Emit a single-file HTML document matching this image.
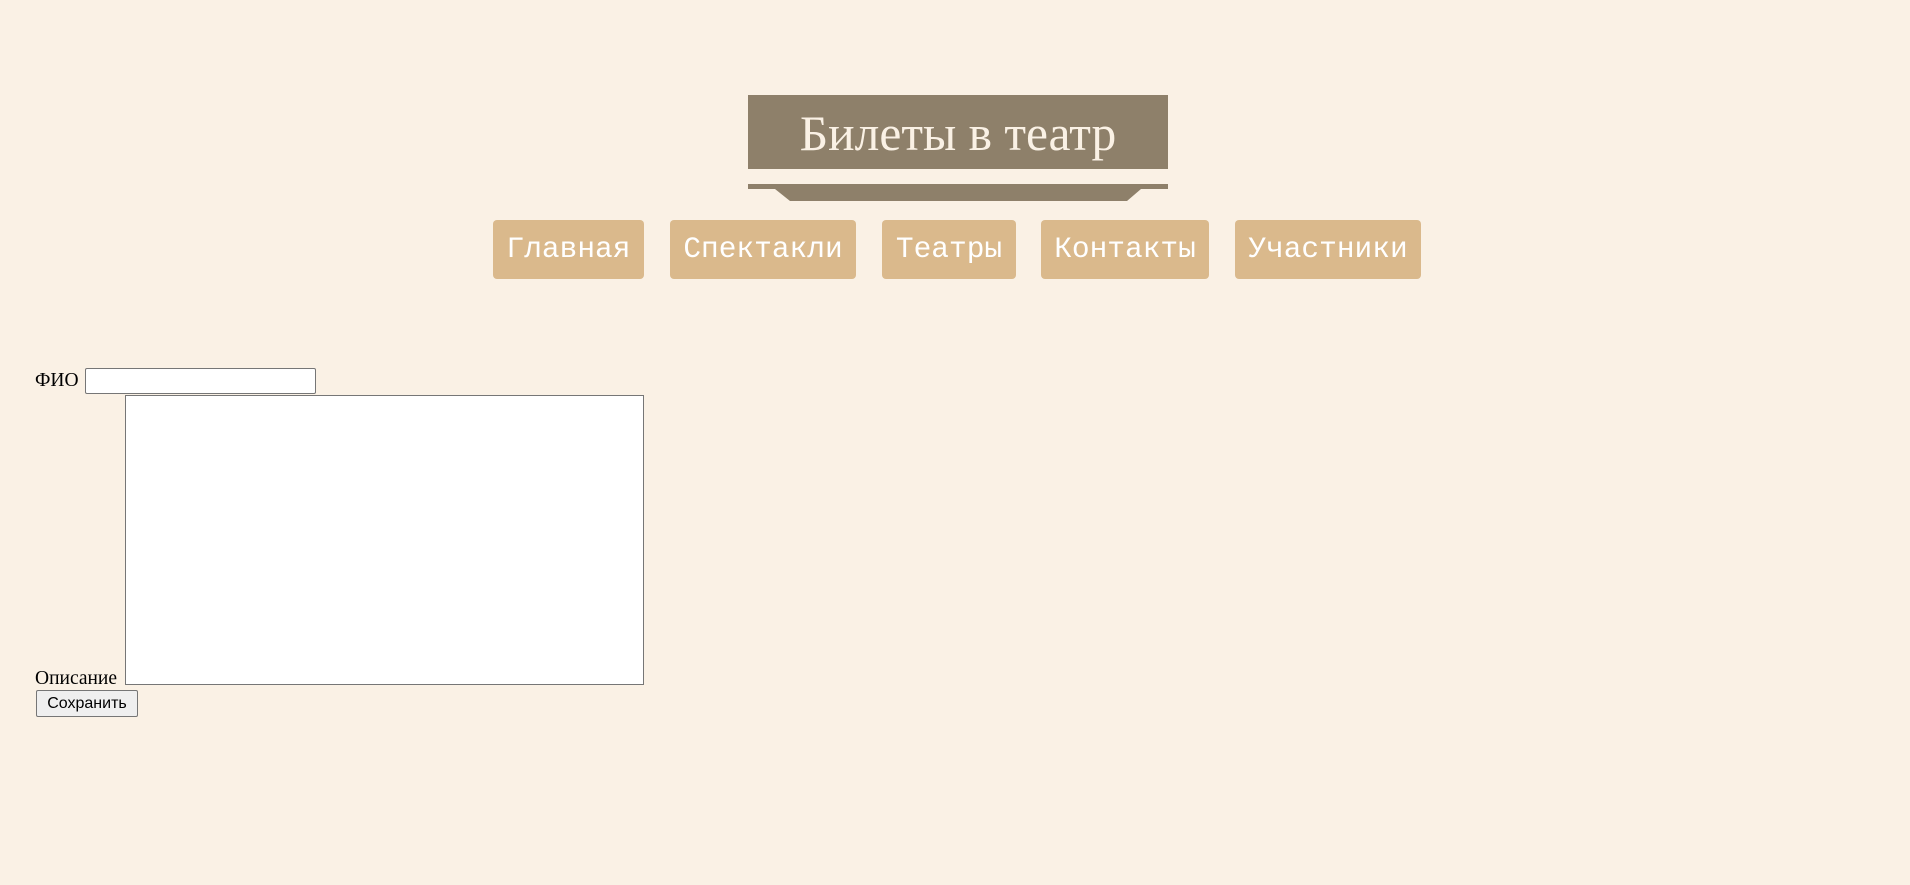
<!DOCTYPE html>
<html><head><meta charset="utf-8"><style>
html,body{margin:0;padding:0;background:#FAF1E5;width:1910px;height:885px;overflow:hidden;position:relative}
.t{position:absolute;left:748px;top:95px;width:420px;height:74px;background:#8E806A;color:#FAF1E5;font-family:"Liberation Serif",serif;font-size:49.5px;text-align:center;line-height:78px}
.n{position:absolute;top:220px;height:59px;background:#DAB98C;border-radius:4px;color:#fff;font-family:"Liberation Mono",monospace;font-size:29.5px;line-height:59px;text-align:center}
.l{position:absolute;font-family:"Liberation Serif",serif;font-size:19.5px;color:#000}
</style></head><body>
<div class="t">Билеты в театр</div>
<svg style="position:absolute;left:0;top:0" width="1910" height="210"><path d="M748 184H1168V189H1141L1127 201H790L775 189H748Z" fill="#8E806A"/></svg>
<div class="n" style="left:493px;width:151px">Главная</div>
<div class="n" style="left:670px;width:186px">Спектакли</div>
<div class="n" style="left:882px;width:134px">Театры</div>
<div class="n" style="left:1041px;width:168px">Контакты</div>
<div class="n" style="left:1235px;width:186px">Участники</div>
<div class="l" style="left:35px;top:370px">ФИО</div>
<div style="position:absolute;left:85px;top:368px;width:229px;height:24px;background:#fff;border:1px solid #767676;border-radius:2px"></div>
<div class="l" style="left:35px;top:668px">Описание</div>
<div style="position:absolute;left:125px;top:395px;width:517px;height:288px;background:#fff;border:1px solid #767676"></div>
<div style="position:absolute;left:36px;top:690px;width:100px;height:25px;background:#EFEFEF;border:1px solid #767676;border-radius:2px;font-family:'Liberation Sans',sans-serif;font-size:16px;line-height:25px;text-align:center">Сохранить</div>
</body></html>
